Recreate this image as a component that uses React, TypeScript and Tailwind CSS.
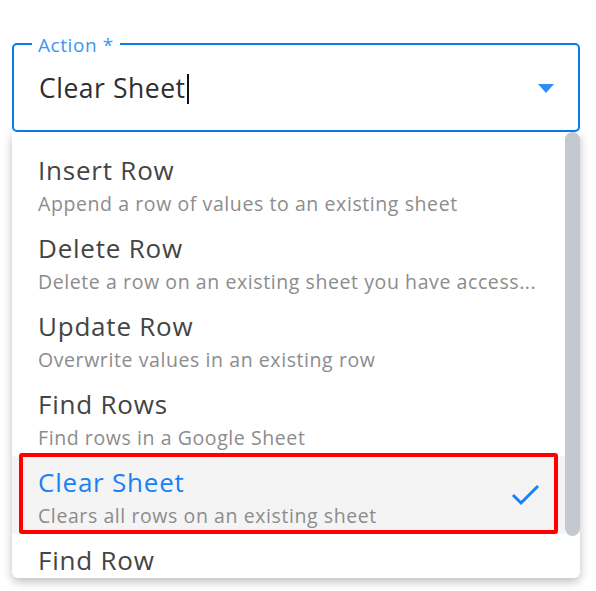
import React from "react";

const items = [
  { t: "Insert Row", d: "Append a row of values to an existing sheet" },
  { t: "Delete Row", d: "Delete a row on an existing sheet you have access..." },
  { t: "Update Row", d: "Overwrite values in an existing row" },
  { t: "Find Rows", d: "Find rows in a Google Sheet" },
  { t: "Clear Sheet", d: "Clears all rows on an existing sheet", sel: true },
  { t: "Find Row", d: "Find a row in a Google Sheet" },
];

export default function App() {
  return (
    <div
      className="w-[596px] h-[591px] bg-white overflow-hidden pt-[43px] pl-[12px]"
      style={{ fontFamily: '"Open Sans", "Noto Sans", sans-serif' }}
    >
      <div className="w-[568px] relative">
        <div className="relative h-[89px] border-2 border-[#0a7cf0] rounded-[5px] flex items-center pl-[25px] pr-[24px]">
          <span className="absolute left-[18px] -top-[13px] bg-white px-[6px] text-[19px] leading-[26px] text-[#3d95f5] tracking-[0.03em]">
            Action *
          </span>
          <span className="text-[26.5px] text-[#2e2e2e] tracking-[0.02em] flex items-center mt-[3px]">
            Clear Sheet
            <span className="inline-block w-[2px] h-[30px] bg-[#111] ml-[1px]" />
          </span>
          <div className="ml-auto mt-[2px] w-0 h-0 border-l-[8px] border-r-[8px] border-t-[9px] border-l-transparent border-r-transparent border-t-[#2f8df5]" />
        </div>
        <div className="relative h-[446px] bg-white rounded-b-[6px] shadow-[0_4px_10px_rgba(0,0,0,0.25)] overflow-hidden">
          <div className="absolute right-0 top-0 w-[15px] h-[404px] bg-[#c4c9d0] rounded-[8px]" />
          <div className="pt-[12px] pr-[15px]">
            {items.map((it) => (
              <div
                key={it.t}
                className={`relative h-[78px] pl-[26px] pr-[24px] flex items-center ${it.sel ? "bg-[#f4f4f4]" : ""}`}
              >
                <div className="flex-1 min-w-0 mt-[5px]">
                  <div
                    className={`text-[26px] leading-[32px] tracking-[0.03em] ${it.sel ? "text-[#1a80f6]" : "text-[#444444]"}`}
                  >
                    {it.t}
                  </div>
                  <div className="text-[19.5px] leading-[26px] mt-[5px] tracking-[0.03em] text-[#8c8c8c] truncate">
                    {it.d}
                  </div>
                </div>
                {it.sel && (
                  <svg width="30" height="24" viewBox="0 0 30 24" className="ml-2">
                    <path d="M2 12 L10 20 L27 3" fill="none" stroke="#1a80f6" strokeWidth="3" />
                  </svg>
                )}
                {it.sel && (
                  <div className="absolute left-[7px] top-[-3px] w-[539px] h-[81px] border-[4px] border-[#ff0000] rounded-[3px]" />
                )}
              </div>
            ))}
          </div>
        </div>
      </div>
    </div>
  );
}
